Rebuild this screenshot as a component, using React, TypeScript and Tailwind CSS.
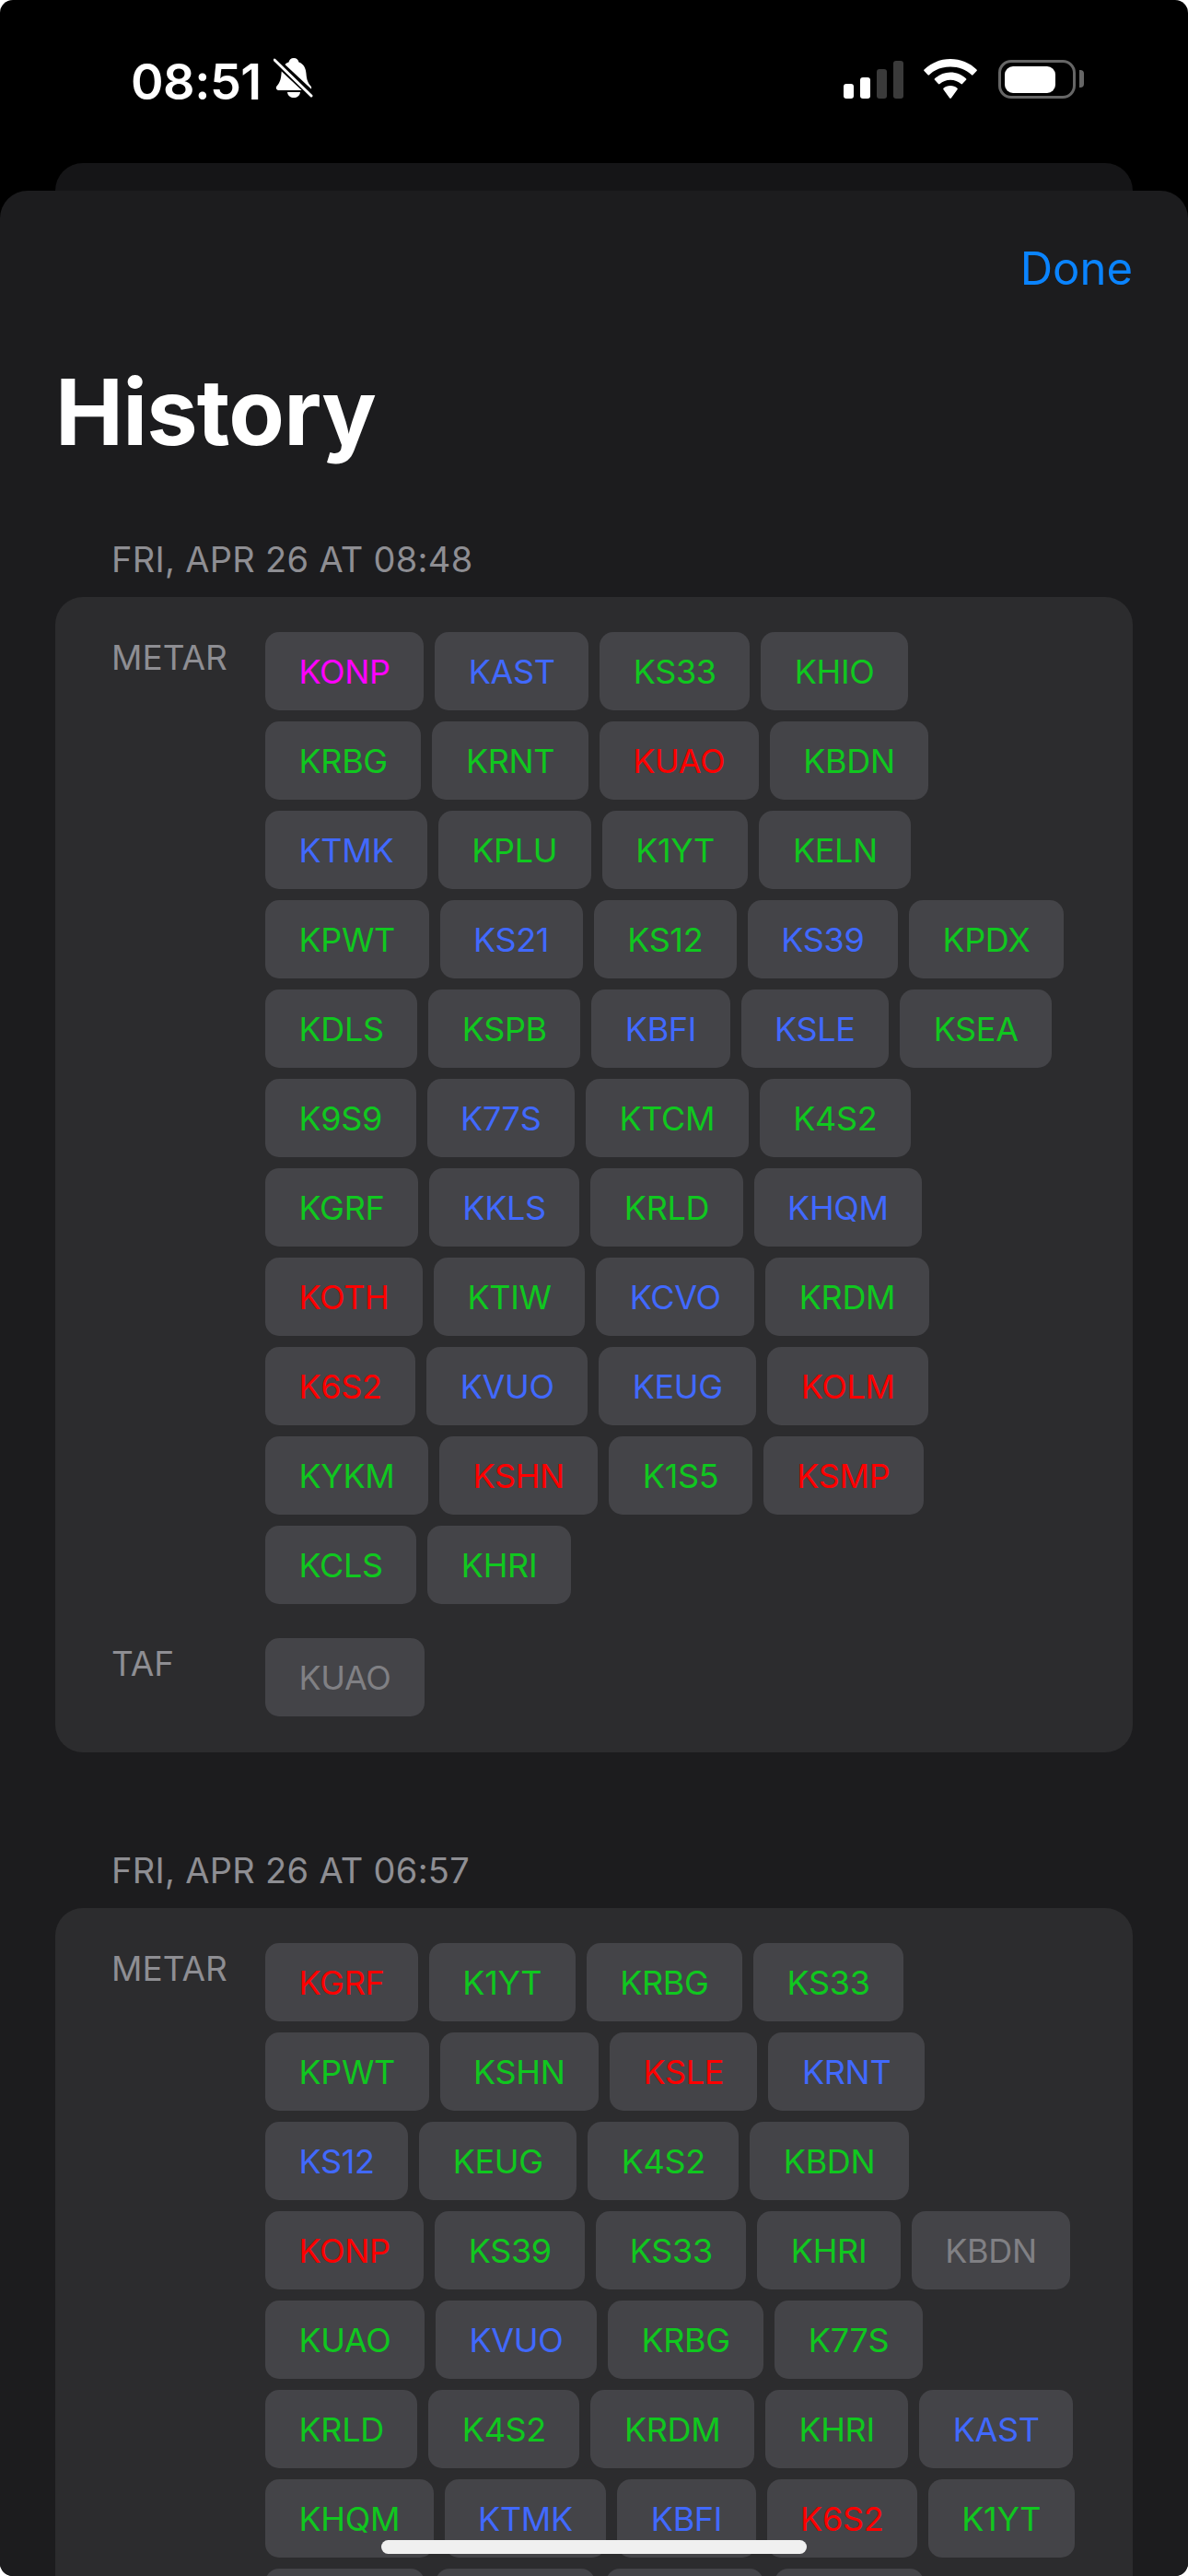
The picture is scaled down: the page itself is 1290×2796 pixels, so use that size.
const G = 'g', B = 'b', R = 'r', M = 'm', N = 'n';
const colors: Record<string, string> = {
  g: 'text-[#10c71f]',
  b: 'text-[#4169ff]',
  r: 'text-[#ff0000]',
  m: 'text-[#ff00ff]',
  n: 'text-[#808084]',
};
type Chip = [string, string];
const first: Chip[][] = [
  [['KONP', M], ['KAST', B], ['KS33', G], ['KHIO', G]],
  [['KRBG', G], ['KRNT', G], ['KUAO', R], ['KBDN', G]],
  [['KTMK', B], ['KPLU', G], ['K1YT', G], ['KELN', G]],
  [['KPWT', G], ['KS21', B], ['KS12', G], ['KS39', B], ['KPDX', G]],
  [['KDLS', G], ['KSPB', G], ['KBFI', B], ['KSLE', B], ['KSEA', G]],
  [['K9S9', G], ['K77S', B], ['KTCM', G], ['K4S2', G]],
  [['KGRF', G], ['KKLS', B], ['KRLD', G], ['KHQM', B]],
  [['KOTH', R], ['KTIW', G], ['KCVO', B], ['KRDM', G]],
  [['K6S2', R], ['KVUO', B], ['KEUG', B], ['KOLM', R]],
  [['KYKM', G], ['KSHN', R], ['K1S5', G], ['KSMP', R]],
  [['KCLS', G], ['KHRI', G]],
];
const second: Chip[][] = [
  [['KGRF', R], ['K1YT', G], ['KRBG', G], ['KS33', G]],
  [['KPWT', G], ['KSHN', G], ['KSLE', R], ['KRNT', B]],
  [['KS12', B], ['KEUG', G], ['K4S2', G], ['KBDN', G]],
  [['KONP', R], ['KS39', G], ['KS33', G], ['KHRI', G], ['KBDN', N]],
  [['KUAO', G], ['KVUO', B], ['KRBG', G], ['K77S', G]],
  [['KRLD', G], ['K4S2', G], ['KRDM', G], ['KHRI', G], ['KAST', B]],
  [['KHQM', G], ['KTMK', B], ['KBFI', B], ['K6S2', R], ['K1YT', G]],
];

function Rows({ label, rows, children }: { label: string; rows: Chip[][]; children?: React.ReactNode }) {
  return (
    <div className="flex">
      <div className="w-[228px] shrink-0 pl-[61px] pt-[6px] text-[#8e8e93] text-[37px] leading-[44px]">{label}</div>
      <div className="flex flex-col gap-y-[12px]">
        {rows.map((r, i) => (
          <div key={i} className="flex gap-x-[12px]">
            {r.map(([t, c], j) => (
              <div key={j} className={`h-[85px] rounded-[15px] bg-[#444448] px-[36.500px] flex items-center text-[36px] tracking-[-0.35px] ${colors[c]}`}>{t}</div>
            ))}
          </div>
        ))}
        {children}
      </div>
    </div>
  );
}

function Bell() {
  return (
    <svg width="44" height="46" viewBox="0 0 44 46" className="ml-[13px] mt-[-3px]">
      <path d="M22 1c3 0 5 2 5.500 4.500C33 7.500 35 12 35.500 18c.5 7 2 10 5 13.500 1.500 2 .5 4.500-2.500 4.500H6c-3 0-4-2.500-2.500-4.500C6.500 28 8 25 8.500 18 9 12 11 7.500 16.500 5.500 17 3 19 1 22 1z" fill="#fff" />
      <path d="M15 38h14c-.5 4-3.500 6-7 6s-6.500-2-7-6z" fill="#fff" />
      <path d="M-2 0L44 43" stroke="#000" strokeWidth="8" />
      <path d="M1 3L41 42" stroke="#fff" strokeWidth="3" strokeLinecap="round" />
    </svg>
  );
}

function Wifi() {
  return (
    <svg width="58" height="43" viewBox="0 0 58 43" className="ml-[22px]">
      <path d="M29 0c11 0 21 4.200 28.500 11.500c.5.500.5 1 0 1.500l-4 4.300c-.5.500-1 .5-1.500 0C46 11.500 38 8.500 29 8.500S12 11.500 6 17.300c-.5.500-1 .5-1.500 0l-4-4.300c-.5-.5-.5-1 0-1.500C8 4.200 18 0 29 0z" fill="#fff" />
      <path d="M29 14.500c6.500 0 12.500 2.500 17 6.800.5.500.5 1 0 1.500l-4 4.300c-.5.500-1 .5-1.500 0-3-2.800-7-4.400-11.500-4.400s-8.500 1.600-11.500 4.400c-.5.500-1 .5-1.500 0l-4-4.300c-.5-.5-.5-1 0-1.500 4.500-4.300 10.500-6.800 17-6.800z" fill="#fff" />
      <path d="M29 29c3 0 5.500 1 7.500 2.800.5.500.5 1 0 1.500l-6.500 9c-.5.700-1.500.7-2 0l-6.500-9c-.5-.5-.5-1 0-1.500C23.500 30 26 29 29 29z" fill="#fff" />
    </svg>
  );
}

function StatusBar() {
  return (
    <div className="h-[177px] pt-[61px] pl-[142px] pr-[113px] flex items-start justify-between text-white">
      <div className="flex items-start">
        <span className="text-[54px] leading-[56px] font-semibold tracking-[-0.5px]">08:51</span>
        <span className="mt-[4px]"><Bell /></span>
      </div>
      <div className="flex items-end h-[46px]">
        <div className="flex items-end gap-x-[7px]">
          <div className="w-[11px] h-[16px] rounded-[3px] bg-white" />
          <div className="w-[11px] h-[23px] rounded-[3px] bg-white" />
          <div className="w-[11px] h-[32px] rounded-[3px] bg-[#3a3a3a]" />
          <div className="w-[11px] h-[41px] rounded-[3px] bg-[#3a3a3a]" />
        </div>
        <Wifi />
        <div className="ml-[23px] w-[84px] h-[42px] rounded-[14px] border-[3.500px] border-[#666666] p-[3.500px]">
          <div className="w-[55px] h-full rounded-[9px] bg-white" />
        </div>
        <div className="ml-[4px] mb-[12px] w-[5px] h-[19px] rounded-r-[4px] bg-[#666666]" />
      </div>
    </div>
  );
}

export default function App() {
  return (
    <div className="w-[1290px] h-[2796px] bg-white font-['Inter','Liberation_Sans',sans-serif]">
      <div className="relative w-full h-full bg-black rounded-[14px] overflow-hidden">
        <StatusBar />
        <div className="mx-[60px] h-[60px] rounded-t-[30px] bg-[#151517]" />
        <div className="relative mt-[-30px] h-[2589px] rounded-t-[30px] bg-[#1c1c1e] overflow-hidden">
          <div className="pt-[55px] pr-[60px] text-right text-[#0a84ff] text-[49px] leading-[60px]">Done</div>
          <div className="mt-[65px] pl-[60px] text-white text-[99px] leading-[120px] font-bold tracking-[-0.800px]">History</div>
          <div className="mt-[77px] pl-[121px] text-[#8e8e93] text-[38px] leading-[46px] tracking-[0.3px]">FRI, APR 26 AT 08:48</div>
          <div className="mt-[18px] mx-[60px] pt-[38px] pb-[39px] rounded-[30px] bg-[#2c2c2e]">
            <Rows label="METAR" rows={first} />
            <div className="mt-[37px]">
              <Rows label="TAF" rows={[[['KUAO', N]]]} />
            </div>
          </div>
          <div className="mt-[105px] pl-[121px] text-[#8e8e93] text-[38px] leading-[46px] tracking-[0.3px]">FRI, APR 26 AT 06:57</div>
          <div className="mt-[18px] mx-[60px] pt-[38px] rounded-[30px] bg-[#2c2c2e]">
            <Rows label="METAR" rows={second}>
              <div className="flex gap-x-[12px]">
                <div className="w-[173px] h-[85px] rounded-[15px] bg-[#444448]" />
                <div className="w-[173px] h-[85px] rounded-[15px] bg-[#444448]" />
                <div className="w-[171px] h-[85px] rounded-[15px] bg-[#444448]" />
                <div className="w-[162px] h-[85px] rounded-[15px] bg-[#444448]" />
              </div>
            </Rows>
          </div>
        </div>
        <div className="absolute left-[414px] top-[2757px] w-[462px] h-[15px] rounded-full bg-[#f0f0f0]" />
      </div>
    </div>
  );
}
